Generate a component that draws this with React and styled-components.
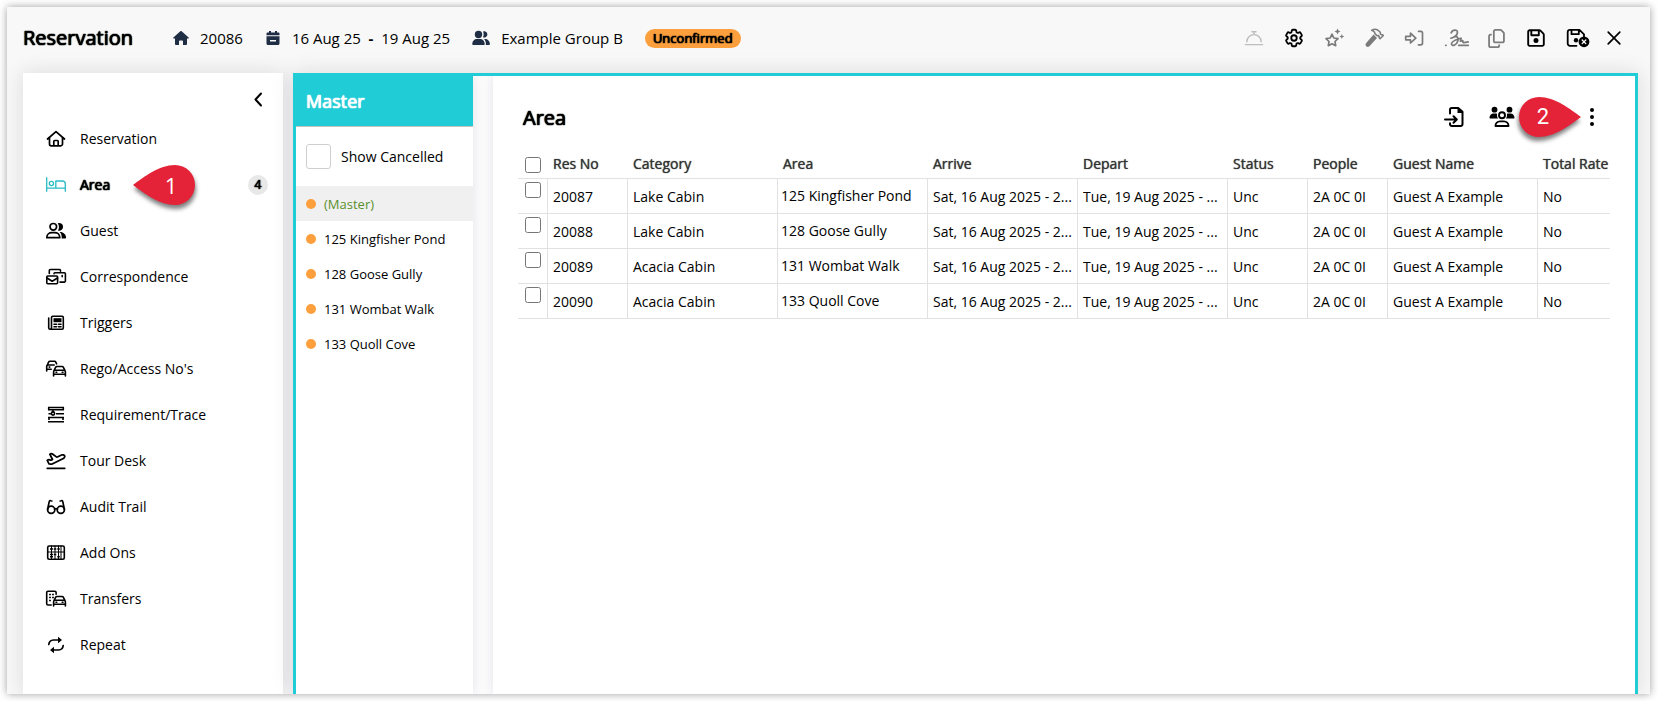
import React from "react";
import styled, { createGlobalStyle, css } from "styled-components";
import { FaRegCopy, FaRegFloppyDisk } from "react-icons/fa6";
import { HiOutlineCog6Tooth } from "react-icons/hi2";
import { PlaneTakeoff } from "lucide-react";

const GlobalStyle = createGlobalStyle`
  * { box-sizing: border-box; }
  body {
    margin: 0;
    background: #fff;
    color: #000;
    font-family: "Open Sans", "Noto Sans", sans-serif;
    font-size: 14px;
    line-height: 20px;
  }
  button { font: inherit; color: inherit; background: none; border: 0; padding: 0; cursor: pointer; }
  h1, h2, ul { margin: 0; padding: 0; }
  ul { list-style: none; }
`;

const heavy = css`
  font-weight: 400;
  text-shadow: 0 0 1px currentColor, 0 0 1px currentColor, 0 0 1px currentColor;
`;
const semi = css`
  font-weight: 400;
  text-shadow: 0 0 1px currentColor;
`;
const panelShadow = css`
  box-shadow: 0 0 20px rgba(20, 20, 50, 0.13);
`;
const innerShadow = css`
  box-shadow: 0 0 12px rgba(20, 20, 50, 0.1);
`;

const Window = styled.div`
  display: flex;
  flex-direction: column;
  min-height: calc(100vh - 15px);
  margin: 7px 8px 8px 7px;
  background: #f8f8f8;
  box-shadow: 0 0 8px rgba(0, 0, 0, 0.38);
`;

const Header = styled.header`
  display: flex;
  align-items: center;
  height: 66px;
  padding: 0 28px 4px 16px;
`;

const Title = styled.h1`
  ${heavy}
  width: 150px;
  font-size: 20px;
  line-height: 28px;
`;

const Fact = styled.div`
  display: flex;
  align-items: center;
  gap: 11px;
  margin-right: 22px;
  font-size: 15px;
  white-space: pre;
  svg { color: #1f2e44; }
  &:last-of-type { margin-right: 20px; }
`;

const Dash = styled.span`
  font-weight: 700;
`;

const StatusBadge = styled.span`
  ${heavy}
  height: 19px;
  padding: 0 8px;
  border-radius: 10px;
  background: #fd9f3d;
  font-size: 13px;
  line-height: 18px;
`;

const HeaderTools = styled.div`
  display: flex;
  align-items: center;
  gap: 16px;
  margin-left: auto;
`;

const ToolButton = styled.button`
  display: flex;
  align-items: center;
  justify-content: center;
  width: ${(p) => p.$w || 24}px;
  height: 28px;
  color: ${(p) => p.$color || "#000"};
  svg { flex: none; }
`;

const Body = styled.div`
  display: flex;
  flex: 1;
  gap: 10px;
  padding: 0 12px 0 16px;
  clip-path: inset(-20px 0 0 0);
`;

const Sidebar = styled.nav`
  ${panelShadow}
  width: 260px;
  flex: none;
  padding: 12px 15px 26px 21px;
  background: #fff;
`;

const CollapseRow = styled.div`
  display: flex;
  justify-content: flex-end;
  height: 31px;
`;

const NavItem = styled.li`
  position: relative;
  display: flex;
  align-items: center;
  height: 46px;
`;

const NavLink = styled.a`
  display: flex;
  align-items: center;
  gap: 12px;
  flex: 1;
  color: #000;
  text-decoration: none;
  ${(p) => p.$active && heavy}
  svg { color: ${(p) => (p.$active ? "#27bdc4" : "#000")}; }
`;

const Count = styled.span`
  ${heavy}
  width: 20px;
  height: 20px;
  border-radius: 10px;
  background: #e8e8e8;
  font-size: 12px;
  text-align: center;
`;

const Callout = styled.span`
  position: absolute;
  top: ${(p) => p.$top}px;
  left: ${(p) => p.$left}px;
  width: 62px;
  height: 40px;
  color: #fff;
  font: 22px/40px ${(p) => p.$font};
  text-align: center;
  text-indent: ${(p) => (p.$flip ? "-14px" : "14px")};
  pointer-events: none;
  svg {
    position: absolute;
    inset: 0;
    overflow: visible;
    filter: drop-shadow(1px 4px 2px rgba(0, 0, 0, 0.5));
    transform: ${(p) => (p.$flip ? "scaleX(-1)" : "none")};
  }
  span { position: relative; }
`;

const Workspace = styled.main`
  ${panelShadow}
  display: flex;
  flex: 1;
  gap: 20px;
  min-width: 0;
  border: 3px solid #20cdd6;
  border-bottom: 0;
  background: #fcfcfd;
`;

const MasterPanel = styled.aside`
  ${innerShadow}
  width: 177px;
  flex: none;
  background: #fff;
  clip-path: inset(0 -20px 0 0);
`;

const MasterTitle = styled.h2`
  ${heavy}
  height: 51px;
  padding: 0 10px;
  border-bottom: 1px solid #c4c4c4;
  background: #20cdd6;
  color: #fff;
  font-size: 18px;
  line-height: 50px;
`;

const CancelledToggle = styled.label`
  display: flex;
  align-items: center;
  gap: 10px;
  height: 59px;
  padding: 0 10px;
`;

const LargeCheckbox = styled.input`
  appearance: none;
  width: 25px;
  height: 25px;
  margin: 0;
  border: 1px solid #cfcfcf;
  border-radius: 3px;
  background: #fff;
`;

const AreaOption = styled.button`
  display: flex;
  align-items: center;
  gap: 8px;
  width: 100%;
  height: 35px;
  padding: 0 10px;
  background: ${(p) => (p.$active ? "#f0f0f0" : "transparent")};
  color: ${(p) => (p.$active ? "#5a8f2e" : "#000")};
  font-size: 13px;
  &::before {
    content: "";
    width: 10px;
    height: 10px;
    border-radius: 5px;
    background: #fd9f3d;
  }
`;

const AreaPanel = styled.section`
  ${innerShadow}
  flex: 1;
  min-width: 0;
  padding: 24px 25px;
  background: #fff;
  clip-path: inset(0 0 0 -20px);
`;

const PanelHead = styled.div`
  display: flex;
  align-items: center;
  justify-content: space-between;
  height: 36px;
  padding: 0 12px 0 5px;
`;

const PanelTitle = styled.h2`
  ${heavy}
  font-size: 20px;
  line-height: 28px;
`;

const PanelTools = styled.div`
  display: flex;
  align-items: center;
  gap: 24px;
  padding-bottom: 2px;
`;

const MoreSlot = styled.div`
  position: relative;
  display: flex;
  padding-left: 48px;
`;

const TableClip = styled.div`
  overflow: hidden;
  padding-top: 13px;
`;

const Table = styled.table`
  width: 100%;
  min-width: 1092px;
  table-layout: fixed;
  border-collapse: separate;
  border-spacing: 0;
`;

const Th = styled.th`
  ${semi}
  height: 30px;
  padding: 1px 0 0 6px;
  border-bottom: 1px solid #e4e1e2;
  color: #333;
  text-align: left;
  white-space: nowrap;
  &:first-child { padding: 2px 0 0 7px; }
`;

const Td = styled.td`
  height: 35px;
  padding: ${(p) => (p.$raised ? "0 4px 0 3px" : "2px 4px 0 5px")};
  border-bottom: 1px solid #e1e1e1;
  border-left: 1px solid #e1e1e1;
  overflow: hidden;
  text-overflow: ellipsis;
  white-space: nowrap;
  &:first-child {
    padding: 3px 0 0 7px;
    border-left: 0;
    vertical-align: top;
  }
`;

const Check = styled.input`
  display: block;
  width: 16px;
  height: 16px;
  margin: 0;
`;

/* Line icons share a 24 unit grid, one unit to a pixel. */
const Icon = ({ children, size = 24, w = 1.5, ...rest }) => (
  <svg width={size} height={size} viewBox="0 0 24 24" fill="none" stroke="currentColor"
    strokeWidth={w} strokeLinecap="round" strokeLinejoin="round" aria-hidden="true" {...rest}>
    {children}
  </svg>
);
const solid = { fill: "currentColor", stroke: "none" };

const Home = () => (
  <Icon w={1.7}><path d="M3.5 12 12 4.6 20.500 12M5.500 10.500V17a1.800 1.800 0 0 0 1.800 1.800h9.400a1.800 1.800 0 0 0 1.800-1.800v-6.500M9.800 18.500v-4.200a.8.8 0 0 1 .8-.8h2.800a.8.8 0 0 1 .8.8v4.200" /></Icon>
);
const Bed = () => (
  <Icon w={1.300}><path d="M2.700 4.700v13.600M2.700 15.200h18.600M21.300 18.300V11a3 3 0 0 0-3-3h-6.500v7" /><circle cx="7.400" cy="10.500" r="2.100" /></Icon>
);
const Guest = () => (
  <Icon w={1.700}>
    <circle cx="9.300" cy="7.800" r="3.300" />
    <path d="M2.800 18.700c0-3.300 2.600-5 5-5h3c2.500 0 5 1.700 5 5z" />
    <path {...solid} d="M13.700 4.200a3.900 3.900 0 1 1 .2 7.300c1.500-2 1.500-5-.2-7.300zM15.600 13.100c3.500-.3 6.500 2.400 6.500 5.600 0 .5-.3.8-.8.8h-3.600c.2-2.600-.4-4.800-2.100-6.400z" />
  </Icon>
);
const Mail = () => (
  <Icon w={1.600}>
    <rect x="2.800" y="11" width="10.800" height="7.800" rx="1" />
    <path d="m3 13 5.200 3.200L13.500 13M5.300 8.500v-3a1 1 0 0 1 1-1h9.200a1 1 0 0 1 1 1v.8M10 8.700a1 1 0 0 1 1-1h9.400a1 1 0 0 1 1 1v7.400a1 1 0 0 1-1 1H16" />
    <path d="M18.200 10.500v1.200" />
  </Icon>
);
const News = () => (
  <Icon w={1.600}>
    <path d="M7.500 6.500a1.200 1.200 0 0 1 1.200-1.200h9.400a1.200 1.200 0 0 1 1.200 1.200v10.600a1.200 1.200 0 0 1-1.200 1.200H6.200a1.500 1.500 0 0 1-1.500-1.500V7M7.500 6.500v10.300a1.500 1.500 0 0 1-1.500 1.500" />
    <rect {...solid} x="9.500" y="7.200" width="8" height="4" />
    <path d="M10 13.200h2.500M14.500 13.200h2.500M10 15.800h2.500M14.500 15.800h2.500" />
  </Icon>
);
const carPath = "M10.200 13.200 11.600 10.300a1.500 1.500 0 0 1 1.300-.8h5.200a1.500 1.500 0 0 1 1.300.8l1.400 2.900M9.600 19v-4.300a1.500 1.500 0 0 1 1.500-1.500h8.800a1.500 1.500 0 0 1 1.500 1.500V19M9.600 17.200h11.800M12 15.200h.8M18.200 15.200h.8";
const Cars = () => (
  <Icon w={1.600}><path d={carPath} /><path d="M3.300 8 4.600 5.100a1.500 1.500 0 0 1 1.300-.8h4.600a1.500 1.500 0 0 1 1.300.8l.8 1.700M2.700 14V9.500A1.500 1.500 0 0 1 4.200 8h6M2.700 12.200h4.500M5.200 10.100h.6" /></Icon>
);
const Trace = () => (
  <Icon w={1.600}>
    <path strokeLinecap="butt" d="M4 4.500h16M4 6.800h16M4.700 4.500v2.500M19.300 4.500v2.500M12 10.700h8M4 14.500h16M5 14.500v2.500M19 14.500v2.500M4 18.800h16M4.500 10.700h3" />
    <circle cx="9" cy="10.500" r="1.600" /><path d="M9 6.800V9" />
  </Icon>
);
const Glasses = () => (
  <Icon w={1.700}>
    <circle cx="7.200" cy="14.800" r="3.600" /><circle cx="16.800" cy="14.800" r="3.600" />
    <path d="M10.600 14c1-.5 1.800-.5 2.800 0M3.600 14.500 5.200 6.700a1.200 1.200 0 0 1 1.600-1l1 .3M20.400 14.500 18.800 6.700a1.200 1.200 0 0 0-1.600-1l-1 .3" />
  </Icon>
);
const Abacus = () => (
  <Icon w={1.600}>
    <rect x="3.700" y="5" width="16.600" height="13.200" rx="1.500" />
    <path d="M7.500 5v13M11 5v13M14.500 5v13M17 5v13M3.700 11h16.600" strokeWidth="1" />
    <path strokeLinecap="butt" d="M6 8h3M9.800 8h2.500M13.300 8h2.500M6 13.500h3M9.800 13.500h2.500M13.300 15.800h2.500M6 15.800h3" />
  </Icon>
);
const Transfer = () => (
  <Icon w={1.600}>
    <path d={carPath} />
    <path d="M7.200 18H4a1.300 1.300 0 0 1-1.300-1.300V5.600A1.300 1.300 0 0 1 4 4.300h6.800a1.300 1.300 0 0 1 1.300 1.300v1.600" />
    <path strokeDasharray="1.500 1.500" strokeLinecap="butt" d="M6 6.700v9M9 6.700v4.500" strokeWidth="1.800" />
  </Icon>
);
const Repeat = () => (
  <Icon w={1.700}>
    <path d="M4.800 11.500A5 5 0 0 1 9.500 7H15M19.200 12.500A5 5 0 0 1 14.500 17H9" />
    <path {...solid} d="M14 3.700v6.600L18 7zM10 13.700v6.600L6 17z" />
  </Icon>
);

const SolidHome = () => (
  <Icon size={16} viewBox="0 0 16 16"><path {...solid} d="M8.700 1.300 15.600 7.400c.5.500.2 1.200-.5 1.200H14v5.200c0 .8-.5 1.200-1.200 1.200H10v-3.600c0-.5-.3-.8-.8-.8H6.800c-.5 0-.8.3-.8.8V15H3.200C2.500 15 2 14.600 2 13.800V8.600H.9c-.7 0-1-.7-.5-1.200L7.300 1.300a1 1 0 0 1 1.400 0z" /></Icon>
);
const SolidCalendar = () => (
  <Icon size={16} viewBox="0 0 16 16">
    <path {...solid} d="M4 1h2v1.600h4V1h2v1.600h1.300c.7 0 1.200.5 1.200 1.200v1.400h-13V3.800c0-.7.5-1.200 1.200-1.200H4zM1.500 6.200h13v7.300c0 .8-.6 1.500-1.500 1.500H3c-.9 0-1.500-.7-1.500-1.500zM5 10v1.500h6V10z" fillRule="evenodd" />
  </Icon>
);
const SolidGroup = () => (
  <Icon size={18} viewBox="0 0 18 16">
    <g {...solid}><circle cx="6.500" cy="4.500" r="3.700" /><path d="M.3 14c0-3 2.200-5 4.700-5h3c2.600 0 4.700 2 4.700 5 0 .6-.4 1-1 1H1.300c-.6 0-1-.4-1-1zM11 1.400a3.200 3.200 0 1 1-.1 5.900c1-1.800 1-4.100.1-5.900zM12 9c3.400-.4 5.900 1.800 5.900 4.900 0 .6-.4 1-1 1h-3.100c.3-2.300-.2-4.400-1.800-5.900z" /></g>
  </Icon>
);
const Bell = () => (
  <Icon w={1.400}><path d="M3.300 18.600h17.400M4.800 15.800a7.200 7.200 0 0 1 14.400 0M12 8.500V6M10 5.800h4" /></Icon>
);
const Sparkle = () => (
  <Icon w={1.700}>
    <path d="m10 8.200 1.800 3.800 4.200.6-3 2.900.7 4.200-3.700-2-3.700 2 .7-4.200-3-2.900 4.200-.6z" />
    <path {...solid} d="m15.500 2.500.9 2.100 2.100.9-2.100.9-.9 2.100-.9-2.100-2.100-.9 2.100-.9zM19.800 8l.7 1.800 1.800.7-1.800.7-.7 1.800-.7-1.800-1.800-.7 1.800-.7z" />
  </Icon>
);
const Hammer = () => (
  <Icon w={1.500}>
    <path {...solid} d="m11.600 8.500 3.400 3.400-7.600 8.300c-1 1-2.300 1-3.200.1s-.9-2.300 0-3.200z" />
    <path d="M9.500 4.300c3-1.500 5.800-1 7.700.9l1.200 1.400-.1 1.300 1 .9 1.300-.1.800.8-3.300 3.300-.9-.9.100-1.300-1-1-1.200.2-2.200-2.200c.1-1.500-1.400-2.700-3.400-3.300z" />
  </Icon>
);
const Enter = () => (
  <Icon w={1.700}><path d="M3.700 10.300h4.800V7.200l5.300 4.900-5.300 4.900v-3.200H3.700zM16.500 5.300h2.200a1.800 1.800 0 0 1 1.800 1.800v10a1.800 1.800 0 0 1-1.800 1.800h-2.200" /></Icon>
);
const Signature = () => (
  <Icon w={1.600} size={26}><path d="M2.500 18.700h.3M7.500 7.200C9 4 13.500 4 13.300 6.800c-.1 2.500-3 4.600-6 5.400M11.200 10.500c2.600 0 3.200 2.200 2.300 4.700-1.200 3.600-5 4.600-5.600 2.600-.8-2.800 4.600-4.200 7.600-5.300l1.200-.3-.6 2.800c1.400-.8 2.600-.8 2.300.3-.3 1.200.6 1.200 4.800.3M14.500 18.800h9" /></Icon>
);
const SaveClose = () => (
  <Icon w={1.800}>
    <path d="M10.500 19.800H4a2.300 2.300 0 0 1-2.300-2.300V6A2.300 2.300 0 0 1 4 3.800h9.500L18 8.300v3M5.500 4v4.200h7.300V4" />
    <circle {...solid} cx="10" cy="14.200" r="2.200" /><circle {...solid} cx="18" cy="15.800" r="5.400" />
    <path stroke="#fff" strokeWidth="1.300" d="m16.200 14 3.600 3.600m0-3.600-3.600 3.600" />
  </Icon>
);
const Close = () => <Icon size={16} viewBox="0 0 16 16" w={1.700}><path d="M2.200 2.200 13.800 13.800M13.800 2.200 2.200 13.800" /></Icon>;
const Chevron = () => <Icon w={2}><path d="M17 6.500 11.500 12.500l5.500 6" /></Icon>;
const Import = () => (
  <Icon w={2}><path d="M8 8.500V4.800A1.800 1.800 0 0 1 9.800 3h6.400L20.500 6.800v12.400a1.800 1.800 0 0 1-1.800 1.800H9.800A1.800 1.800 0 0 1 8 19.200v-1M3 14.500h11.500M11.500 11.300l3.300 3.200-3.300 3.200" /><path {...solid} d="M15.500 2.500v5.500h5.500z" /></Icon>
);
const Party = () => (
  <Icon size={26} viewBox="0 0 26 26" w={1.900}>
    <g {...solid}><circle cx="5.500" cy="5.700" r="2.900" /><circle cx="20.500" cy="5.700" r="2.900" /><path d="M.5 14c0-2.500 1.700-4.500 4-4.500h2.200c.5 0 1 .1 1.400.4-.4 1.600 0 3.200 1 4.500H.9zM25.500 14c0-2.500-1.700-4.500-4-4.500h-2.200c-.5 0-1 .1-1.400.4.4 1.600 0 3.200-1 4.500h8.200z" /></g>
    <circle cx="13" cy="11.300" r="3" /><path d="M6.500 22c0-2.800 2-4.600 4.500-4.600h4c2.500 0 4.500 1.800 4.500 4.600z" />
  </Icon>
);
const Dots = () => (
  <Icon><g {...solid}><circle cx="12" cy="5" r="2" /><circle cx="12" cy="12" r="2" /><circle cx="12" cy="19" r="2" /></g></Icon>
);
const CalloutShape = () => (
  <svg width="62" height="40" viewBox="0 0 62 40" aria-hidden="true">
    <path fill="#e42338" d="M0 20C11 12 26 0 42 0a20 20 0 0 1 0 40C26 40 11 28 0 20z" />
  </svg>
);

const navItems = [
  ["Reservation", Home], ["Area", Bed], ["Guest", Guest], ["Correspondence", Mail],
  ["Triggers", News], ["Rego/Access No's", Cars], ["Requirement/Trace", Trace],
  ["Tour Desk", () => <Icon><PlaneTakeoff x="1" y="0" width="22" height="21" strokeWidth={2} /></Icon>],
  ["Audit Trail", Glasses], ["Add Ons", Abacus], ["Transfers", Transfer], ["Repeat", Repeat],
];

const tools = [
  ["Check in", Bell, "#bdbdbd"], ["Settings", () => <HiOutlineCog6Tooth size={22} strokeWidth={2} />],
  ["Highlights", Sparkle, "#7b7b7b"], ["Maintenance", Hammer, "#7b7b7b"], ["Arrive", Enter, "#7b7b7b"],
  ["Sign", Signature, "#7b7b7b", 28], ["Copy", () => <FaRegCopy size={19} />, "#7b7b7b", 20],
  ["Save", () => <FaRegFloppyDisk size={20} />, "#000", 28], ["Save and close", SaveClose, "#000"],
  ["Close", Close, "#000", 16],
];

const areas = ["(Master)", "125 Kingfisher Pond", "128 Goose Gully", "131 Wombat Walk", "133 Quoll Cove"];

const columns = [
  ["Res No", 80], ["Category", 150], ["Area", 150], ["Arrive", 150], ["Depart", 150],
  ["Status", 80], ["People", 80], ["Guest Name", 150], ["Total Rate", null],
];
const rows = [
  ["20087", "Lake Cabin", "125 Kingfisher Pond"],
  ["20088", "Lake Cabin", "128 Goose Gully"],
  ["20089", "Acacia Cabin", "131 Wombat Walk"],
  ["20090", "Acacia Cabin", "133 Quoll Cove"],
].map((r) => [...r, "Sat, 16 Aug 2025 - 2...", "Tue, 19 Aug 2025 - ...", "Unc", "2A 0C 0I", "Guest A Example", "No"]);

export default function App() {
  return (
    <>
      <GlobalStyle />
      <Window>
        <Header>
          <Title>Reservation</Title>
          <Fact><SolidHome />20086</Fact>
          <Fact><SolidCalendar /><span>16 Aug 25 <Dash> - </Dash> 19 Aug 25</span></Fact>
          <Fact><SolidGroup />Example Group B</Fact>
          <StatusBadge>Unconfirmed</StatusBadge>
          <HeaderTools>
            {tools.map(([name, Glyph, color, w]) => (
              <ToolButton key={name} aria-label={name} $color={color} $w={w}><Glyph /></ToolButton>
            ))}
          </HeaderTools>
        </Header>
        <Body>
          <Sidebar>
            <CollapseRow><ToolButton aria-label="Collapse menu"><Chevron /></ToolButton></CollapseRow>
            <ul>
              {navItems.map(([name, Glyph]) => (
                <NavItem key={name}>
                  <NavLink href="#" $active={name === "Area"}><Glyph />{name}</NavLink>
                  {name === "Area" && (
                    <>
                      <Count>4</Count>
                      <Callout $top={3} $left={89} $font={'"Open Sans", sans-serif'}><CalloutShape /><span>1</span></Callout>
                    </>
                  )}
                </NavItem>
              ))}
            </ul>
          </Sidebar>
          <Workspace>
            <MasterPanel>
              <MasterTitle>Master</MasterTitle>
              <CancelledToggle><LargeCheckbox type="checkbox" />Show Cancelled</CancelledToggle>
              {areas.map((a, i) => <AreaOption key={a} $active={i === 0}>{a}</AreaOption>)}
            </MasterPanel>
            <AreaPanel>
              <PanelHead>
                <PanelTitle>Area</PanelTitle>
                <PanelTools>
                  <ToolButton aria-label="Import"><Import /></ToolButton>
                  <ToolButton aria-label="Allocate guests"><Party /></ToolButton>
                  <MoreSlot>
                    <Callout $flip $top={-6} $left={-19} $font="Roboto, sans-serif"><CalloutShape /><span>2</span></Callout>
                    <ToolButton aria-label="More options" $w={12}><Dots /></ToolButton>
                  </MoreSlot>
                </PanelTools>
              </PanelHead>
              <TableClip>
                <Table>
                  <colgroup>
                    <col width="29" />
                    {columns.map(([name, w]) => <col key={name} width={w || undefined} />)}
                  </colgroup>
                  <thead>
                    <tr>
                      <Th><Check type="checkbox" aria-label="Select all" /></Th>
                      {columns.map(([name]) => <Th key={name} scope="col">{name}</Th>)}
                    </tr>
                  </thead>
                  <tbody>
                    {rows.map((r) => (
                      <tr key={r[0]}>
                        <Td><Check type="checkbox" aria-label={`Select ${r[0]}`} /></Td>
                        {r.map((v, i) => <Td key={i} $raised={i === 2}>{v}</Td>)}
                      </tr>
                    ))}
                  </tbody>
                </Table>
              </TableClip>
            </AreaPanel>
          </Workspace>
        </Body>
      </Window>
    </>
  );
}
